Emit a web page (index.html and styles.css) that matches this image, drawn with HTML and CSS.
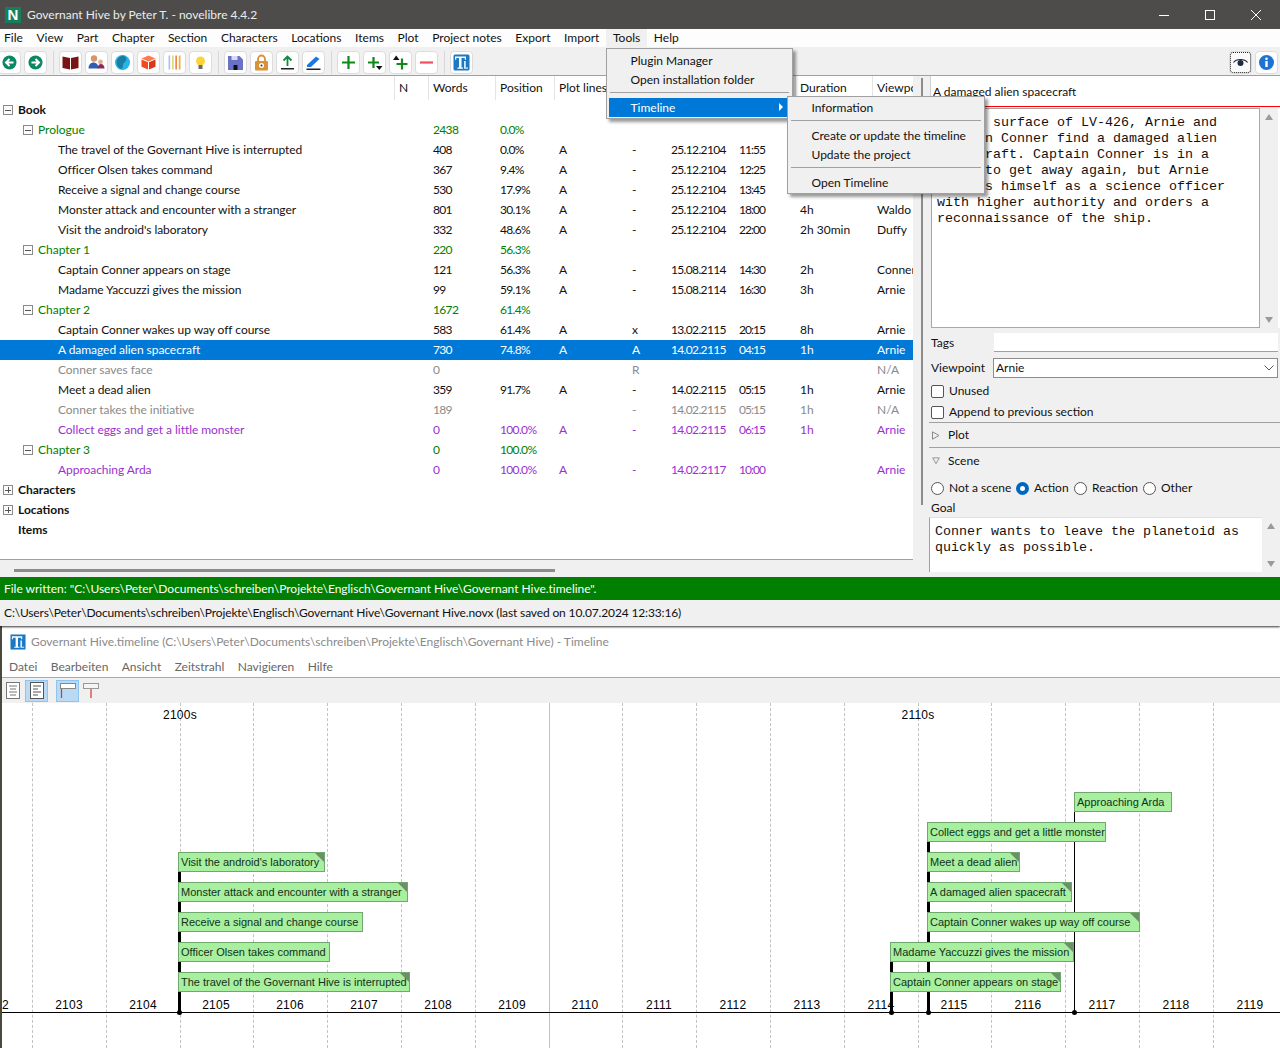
FILE: index.html
```html
<!DOCTYPE html>
<html lang="en">
<head>
<meta charset="utf-8">
<title>Governant Hive by Peter T. - novelibre 4.4.2</title>
<link rel="stylesheet" href="styles.css">
</head>
<body>
<div class="app">
  <section class="main-win">
    <header class="titlebar">
      <span class="app-logo">N</span>
      <span class="title-text">Governant Hive by Peter T. - novelibre 4.4.2</span>
      <span class="win-controls">
        <svg width="12" height="12" viewBox="0 0 12 12"><path d="M1 6.5h10" stroke="#fff"/></svg>
        <svg width="12" height="12" viewBox="0 0 12 12"><rect x="1.5" y="1.5" width="9" height="9" fill="none" stroke="#fff"/></svg>
        <svg width="12" height="12" viewBox="0 0 12 12"><path d="M1 1l10 10M11 1L1 11" stroke="#fff"/></svg>
      </span>
    </header>
    <nav class="menubar">
      <span>File</span><span>View</span><span>Part</span><span>Chapter</span><span>Section</span><span>Characters</span><span>Locations</span><span>Items</span><span>Plot</span><span>Project notes</span><span>Export</span><span>Import</span><span class="menu-open">Tools</span><span>Help</span>
    </nav>
    <div class="toolbar">
      <div class="tgroup">
        <button class="tb"><svg viewBox="0 0 17 17"><circle cx="8.5" cy="8.5" r="7" fill="#0b8763"/><path d="M12.5 8.5H5.5M8.5 5L5 8.5L8.5 12" fill="none" stroke="#fff" stroke-width="2"/></svg></button>
        <button class="tb"><svg viewBox="0 0 17 17"><circle cx="8.5" cy="8.5" r="7" fill="#0b8763"/><path d="M4.5 8.5H11.5M8.5 5L12 8.5L8.5 12" fill="none" stroke="#fff" stroke-width="2"/></svg></button>
      </div>
      <div class="tgroup">
        <button class="tb"><svg viewBox="0 0 17 17"><path d="M0.5 2.5L8 4V15.5L0.5 14zM16.5 2.5L9 4V15.5L16.5 14z" fill="#7a1414"/></svg></button>
        <button class="tb"><svg viewBox="0 0 17 17"><circle cx="6" cy="4.5" r="3.2" fill="#d9946a"/><path d="M0.5 14.5c0-8 10-8 10 0z" fill="#2f5db4"/><circle cx="12.5" cy="8" r="2.4" fill="#e0b090"/><path d="M9.5 14.5c0-6 7-6 7 0z" fill="#8c2a5e"/></svg></button>
        <button class="tb"><svg viewBox="0 0 17 17"><circle cx="8.5" cy="8.5" r="7.5" fill="#25b4e8"/><path d="M9 1.5c3 1 4 3 3 5s-3 2-3 5c0 2-1 3-2 3.5C3 13 2 9 3 6c1-2 3-4 6-4.500z" fill="#1a7f9e"/></svg></button>
        <button class="tb"><svg viewBox="0 0 17 17"><path d="M8.500 1.500L15.500 4.500L8.500 7.500L1.500 4.500z" fill="#ff7a4d"/><path d="M1.500 5.500L8 8.200V15.500L1.500 12.800z" fill="#f04a1e"/><path d="M15.500 5.500L9 8.200V15.500L15.500 12.800z" fill="#d9381a"/></svg></button>
        <button class="tb"><svg viewBox="0 0 17 17"><rect x="2.500" y="1.500" width="1.700" height="14" fill="#a7c7e8"/><rect x="6" y="1.500" width="1.700" height="14" fill="#e8d27f"/><rect x="9.300" y="1.500" width="1.700" height="14" fill="#ef8a3c"/><rect x="12.800" y="1.500" width="1.700" height="14" fill="#e9b04a"/></svg></button>
        <button class="tb"><svg viewBox="0 0 17 17"><circle cx="8.500" cy="7" r="4.500" fill="#fcd43a"/><rect x="6.500" y="11" width="4" height="4" fill="#6a6a6a"/></svg></button>
      </div>
      <div class="tgroup">
        <button class="tb"><svg viewBox="0 0 17 17"><path d="M1 2h11.500l3.500 3.500V16H1z" fill="#6a72c8"/><rect x="4.500" y="2" width="6" height="4" fill="#d8daf2"/><rect x="6.500" y="11" width="4" height="5" fill="#111"/></svg></button>
        <button class="tb"><svg viewBox="0 0 17 17"><path d="M5 7V5a3.500 3.500 0 0 1 7 0v2" fill="none" stroke="#d89238" stroke-width="1.800"/><rect x="2" y="7" width="13" height="9.500" rx="1" fill="#d89238"/><circle cx="8.500" cy="11.500" r="2.500" fill="#fff"/><circle cx="8.500" cy="11.500" r="1" fill="#333"/></svg></button>
        <button class="tb"><svg viewBox="0 0 17 17"><path d="M8.500 12V3M4.500 6.500L8.500 2.500L12.500 6.500" fill="none" stroke="#118a3c" stroke-width="1.800"/><rect x="2" y="14" width="13" height="1.500" fill="#222"/></svg></button>
        <button class="tb"><svg viewBox="0 0 17 17"><path d="M2 11L11 2.500L14.500 5L6 13H2z" fill="#1c78e0"/><rect x="1.500" y="14.500" width="14" height="1.500" fill="#222"/></svg></button>
      </div>
      <div class="tgroup">
        <button class="tb"><svg viewBox="0 0 17 17"><path d="M8.500 2v13M2 8.500h13" stroke="#0c8a16" stroke-width="2.200"/></svg></button>
        <button class="tb"><svg viewBox="0 0 17 17"><path d="M7.500 3v11M2 8.500h11" stroke="#0c8a16" stroke-width="2.200"/><path d="M10 12h6.500l-3.200 4z" fill="#111"/></svg></button>
        <button class="tb"><svg viewBox="0 0 17 17"><path d="M10 4.500v11M4.500 10h11" stroke="#0c8a16" stroke-width="2.200"/><path d="M1 6h6.500L4.200 1.500z" fill="#111"/></svg></button>
        <button class="tb"><svg viewBox="0 0 17 17"><path d="M2 8.500h13" stroke="#f0505c" stroke-width="2.200"/></svg></button>
      </div>
      <div class="tgroup">
        <button class="tb"><svg viewBox="0 0 17 17"><rect x="0.500" y="0.500" width="16" height="16" rx="1.500" fill="#1b78c4"/><path d="M2 2.500h11v3.200h-1.200V4H8.500v9.500H10v1.200H4.500v-1.200H6V4H3.200v1.700H2z" fill="#fff"/><path d="M11 7h1.800v6.500H15v1.200h-4z" fill="#d6ebfa"/></svg></button>
      </div>
      <div class="tright">
        <button class="tb tb-focus"><svg viewBox="0 0 17 17"><path d="M1.500 8.500c3-4 11-4 14 0" fill="none" stroke="#222" stroke-width="1.200"/><circle cx="8.500" cy="9" r="3" fill="#1c2a44"/></svg></button>
        <button class="tb"><svg viewBox="0 0 17 17"><circle cx="8.500" cy="8.500" r="7.500" fill="#1e72d2"/><rect x="7.300" y="7" width="2.400" height="6" fill="#fff"/><circle cx="8.500" cy="4.800" r="1.300" fill="#fff"/></svg></button>
      </div>
    </div>
    <div class="workspace">
      <div class="left">
        <div class="tree">
          <div class="row head">
            <span class="title"></span><span class="sep">N</span><span class="sep">Words</span><span class="sep">Position</span><span class="sep">Plot lines</span><span></span><span></span><span></span><span class="sep">Duration</span><span class="sep">Viewpoint</span>
          </div>
          <div class="row strong"><span class="title lv0"><i class="exp"></i>Book</span></div>
          <div class="row chap"><span class="title lv1"><i class="exp"></i>Prologue</span><span></span><span>2438</span><span>0.0%</span></div>
          <div class="row"><span class="title lv2">The travel of the Governant Hive is interrupted</span><span></span><span>408</span><span>0.0%</span><span>A</span><span>-</span><span>25.12.2104</span><span>11:55</span></div>
          <div class="row"><span class="title lv2">Officer Olsen takes command</span><span></span><span>367</span><span>9.4%</span><span>A</span><span>-</span><span>25.12.2104</span><span>12:25</span></div>
          <div class="row"><span class="title lv2">Receive a signal and change course</span><span></span><span>530</span><span>17.9%</span><span>A</span><span>-</span><span>25.12.2104</span><span>13:45</span></div>
          <div class="row"><span class="title lv2">Monster attack and encounter with a stranger</span><span></span><span>801</span><span>30.1%</span><span>A</span><span>-</span><span>25.12.2104</span><span>18:00</span><span>4h</span><span>Waldo</span></div>
          <div class="row"><span class="title lv2">Visit the android's laboratory</span><span></span><span>332</span><span>48.6%</span><span>A</span><span>-</span><span>25.12.2104</span><span>22:00</span><span>2h 30min</span><span>Duffy</span></div>
          <div class="row chap"><span class="title lv1"><i class="exp"></i>Chapter 1</span><span></span><span>220</span><span>56.3%</span></div>
          <div class="row"><span class="title lv2">Captain Conner appears on stage</span><span></span><span>121</span><span>56.3%</span><span>A</span><span>-</span><span>15.08.2114</span><span>14:30</span><span>2h</span><span>Conner</span></div>
          <div class="row"><span class="title lv2">Madame Yaccuzzi gives the mission</span><span></span><span>99</span><span>59.1%</span><span>A</span><span>-</span><span>15.08.2114</span><span>16:30</span><span>3h</span><span>Arnie</span></div>
          <div class="row chap"><span class="title lv1"><i class="exp"></i>Chapter 2</span><span></span><span>1672</span><span>61.4%</span></div>
          <div class="row"><span class="title lv2">Captain Conner wakes up way off course</span><span></span><span>583</span><span>61.4%</span><span>A</span><span>x</span><span>13.02.2115</span><span>20:15</span><span>8h</span><span>Arnie</span></div>
          <div class="row sel"><span class="title lv2">A damaged alien spacecraft</span><span></span><span>730</span><span>74.8%</span><span>A</span><span>A</span><span>14.02.2115</span><span>04:15</span><span>1h</span><span>Arnie</span></div>
          <div class="row unused"><span class="title lv2">Conner saves face</span><span></span><span>0</span><span></span><span></span><span>R</span><span></span><span></span><span></span><span>N/A</span></div>
          <div class="row"><span class="title lv2">Meet a dead alien</span><span></span><span>359</span><span>91.7%</span><span>A</span><span>-</span><span>14.02.2115</span><span>05:15</span><span>1h</span><span>Arnie</span></div>
          <div class="row unused"><span class="title lv2">Conner takes the initiative</span><span></span><span>189</span><span></span><span></span><span>-</span><span>14.02.2115</span><span>05:15</span><span>1h</span><span>N/A</span></div>
          <div class="row todo"><span class="title lv2">Collect eggs and get a little monster</span><span></span><span>0</span><span>100.0%</span><span>A</span><span>-</span><span>14.02.2115</span><span>06:15</span><span>1h</span><span>Arnie</span></div>
          <div class="row chap"><span class="title lv1"><i class="exp"></i>Chapter 3</span><span></span><span>0</span><span>100.0%</span></div>
          <div class="row todo"><span class="title lv2">Approaching Arda</span><span></span><span>0</span><span>100.0%</span><span>A</span><span>-</span><span>14.02.2117</span><span>10:00</span><span></span><span>Arnie</span></div>
          <div class="row strong"><span class="title lv0"><i class="exp plus"></i>Characters</span></div>
          <div class="row strong"><span class="title lv0"><i class="exp plus"></i>Locations</span></div>
          <div class="row strong"><span class="title lv0">Items</span></div>
        </div>
        <div class="hscroll"><div class="hthumb"></div></div>
      </div>
      <div class="vscroll"><div class="vthumb"></div></div>
      <div class="right">
        <div class="title-entry">A damaged alien spacecraft</div>
        <div class="editor">
          <div class="mono box">On the surface of LV-426, Arnie and
Captain Conner find a damaged alien
spacecraft. Captain Conner is in a
hurry to get away again, but Arnie
reveals himself as a science officer
with higher authority and orders a
reconnaissance of the ship.</div>
          <div class="sb"><i class="up"></i><i class="down"></i></div>
        </div>
        <div class="field tags"><label>Tags</label><div class="entry"></div></div>
        <div class="field vp"><label>Viewpoint</label><div class="combo">Arnie<svg width="10" height="6" viewBox="0 0 10 6"><path d="M0.500 0.500L5 5L9.500 0.500" fill="none" stroke="#555"/></svg></div></div>
        <div class="check c1"><i class="cb"></i>Unused</div>
        <div class="check c2"><i class="cb"></i>Append to previous section</div>
        <div class="fold plot"><svg width="8" height="9" viewBox="0 0 8 9"><path d="M0.500 0.800L7 4.500L0.500 8.200z" fill="none" stroke="#888"/></svg>Plot</div>
        <div class="fold scene"><svg width="8" height="8" viewBox="0 0 9 8"><path d="M0.800 0.500L8.200 0.500L4.500 7z" fill="none" stroke="#888"/></svg>Scene</div>
        <div class="radios">
          <span class="r r1"><i class="rd"></i>Not a scene</span>
          <span class="r r2"><i class="rd on"></i>Action</span>
          <span class="r r3"><i class="rd"></i>Reaction</span>
          <span class="r"><i class="rd"></i>Other</span>
        </div>
        <div class="goal-label">Goal</div>
        <div class="goal">
          <div class="mono gbox">Conner wants to leave the planetoid as
quickly as possible.</div>
          <div class="sb gsb"><i class="up"></i><i class="down"></i></div>
        </div>
      </div>
    </div>
    <div class="status">File written: "C:\Users\Peter\Documents\schreiben\Projekte\Englisch\Governant Hive\Governant Hive.timeline".</div>
    <div class="pathbar">C:\Users\Peter\Documents\schreiben\Projekte\Englisch\Governant Hive\Governant Hive.novx (last saved on 10.07.2024 12:33:16)</div>

    <div class="popup pop-tools">
      <div class="mi">Plugin Manager</div>
      <div class="mi">Open installation folder</div>
      <div class="msep"></div>
      <div class="mi active">Timeline<i class="arrow"></i></div>
    </div>
    <div class="popup pop-sub">
      <div class="mi">Information</div>
      <div class="msep"></div>
      <div class="mi">Create or update the timeline</div>
      <div class="mi">Update the project</div>
      <div class="msep"></div>
      <div class="mi">Open Timeline</div>
    </div>
  </section>

  <section class="tl-win">
    <header class="tl-title">
      <svg width="16" height="16" viewBox="0 0 17 17"><rect x="0.500" y="0.500" width="16" height="16" fill="#1b78c4"/><path d="M2 2.500h11v3.200h-1.200V4H8.500v9.500H10v1.200H4.500v-1.200H6V4H3.200v1.700H2z" fill="#fff"/><path d="M11 7h1.800v6.500H15v1.200h-4z" fill="#d6ebfa"/></svg>
      <span>Governant Hive.timeline (C:\Users\Peter\Documents\schreiben\Projekte\Englisch\Governant Hive) - Timeline</span>
    </header>
    <nav class="tl-menu"><span>Datei</span><span>Bearbeiten</span><span>Ansicht</span><span>Zeitstrahl</span><span>Navigieren</span><span>Hilfe</span></nav>
    <div class="tl-tools">
      <span class="tt"><svg width="14" height="17" viewBox="0 0 14 17"><rect x="0.500" y="0.500" width="13" height="16" fill="#fff" stroke="#777"/><path d="M3 4h8M4 7h6M3 10h8M4 13h6" stroke="#777"/></svg></span>
      <span class="tt on"><svg width="14" height="17" viewBox="0 0 14 17"><rect x="0.500" y="0.500" width="13" height="16" fill="#fff" stroke="#555"/><path d="M3 4h8M3 7h5M3 10h8M3 13h5" stroke="#555"/></svg></span>
      <span class="tt on wide"><svg width="16" height="17" viewBox="0 0 16 17"><rect x="0.500" y="1.500" width="15" height="5" fill="#fff" stroke="#888"/><path d="M1.500 7v9" stroke="#d8342c" stroke-width="1.200"/></svg></span>
      <span class="tt plain"><svg width="16" height="17" viewBox="0 0 16 17"><rect x="0.500" y="1.500" width="15" height="5" fill="#f4f4f4" stroke="#999"/><path d="M8 7v9" stroke="#d8342c" stroke-width="1.200"/></svg></span>
    </div>
    <div class="canvas">
      <i class="g" style="left:32px"></i><i class="g" style="left:106px"></i><i class="g" style="left:180px"></i><i class="g" style="left:253px"></i><i class="g" style="left:327px"></i><i class="g" style="left:401px"></i><i class="g" style="left:475px"></i><i class="g solid" style="left:549px"></i><i class="g" style="left:622px"></i><i class="g" style="left:696px"></i><i class="g" style="left:770px"></i><i class="g" style="left:844px"></i><i class="g" style="left:918px"></i><i class="g" style="left:991px"></i><i class="g" style="left:1065px"></i><i class="g" style="left:1139px"></i><i class="g" style="left:1213px"></i>
      <span class="decade" style="left:180px">2100s</span><span class="decade" style="left:918px">2110s</span>
      <i class="axis"></i>
      <span class="yr" style="left:-5px">2102</span><span class="yr" style="left:69px">2103</span><span class="yr" style="left:143px">2104</span><span class="yr" style="left:216px">2105</span><span class="yr" style="left:290px">2106</span><span class="yr" style="left:364px">2107</span><span class="yr" style="left:438px">2108</span><span class="yr" style="left:512px">2109</span><span class="yr" style="left:585px">2110</span><span class="yr" style="left:659px">2111</span><span class="yr" style="left:733px">2112</span><span class="yr" style="left:807px">2113</span><span class="yr" style="left:881px">2114</span><span class="yr" style="left:954px">2115</span><span class="yr" style="left:1028px">2116</span><span class="yr" style="left:1102px">2117</span><span class="yr" style="left:1176px">2118</span><span class="yr" style="left:1250px">2119</span>
      <i class="stem" style="left:178px;top:149px;height:161px"></i><i class="dot" style="left:177px"></i>
      <i class="stem" style="left:890px;top:239px;height:71px"></i><i class="dot" style="left:889px"></i>
      <i class="stem" style="left:927px;top:119px;height:191px"></i><i class="dot" style="left:926px"></i>
      <i class="stem thin" style="left:1074px;top:89px;height:221px"></i><i class="dot" style="left:1072px"></i>
      <div class="ev note" style="left:178px;top:149px;width:147px">Visit the android's laboratory</div>
      <div class="ev note" style="left:178px;top:179px;width:230px">Monster attack and encounter with a stranger</div>
      <div class="ev" style="left:178px;top:209px;width:185px">Receive a signal and change course</div>
      <div class="ev" style="left:178px;top:239px;width:152px">Officer Olsen takes command</div>
      <div class="ev note" style="left:178px;top:269px;width:232px">The travel of the Governant Hive is interrupted</div>
      <div class="ev" style="left:1074px;top:89px;width:98px">Approaching Arda</div>
      <div class="ev" style="left:927px;top:119px;width:179px">Collect eggs and get a little monster</div>
      <div class="ev note" style="left:927px;top:149px;width:93px">Meet a dead alien</div>
      <div class="ev note" style="left:927px;top:179px;width:145px">A damaged alien spacecraft</div>
      <div class="ev note" style="left:927px;top:209px;width:213px">Captain Conner wakes up way off course</div>
      <div class="ev note" style="left:890px;top:239px;width:184px">Madame Yaccuzzi gives the mission</div>
      <div class="ev note" style="left:890px;top:269px;width:171px">Captain Conner appears on stage</div>
    </div>
  </section>
</div>
</body>
</html>
```

FILE: styles.css
```css
* { box-sizing: border-box; }
html, body { margin: 0; padding: 0; }
body { width: 1280px; height: 1048px; overflow: hidden; background: #fff; color: #111; font: 12px/16px Lato, "Noto Sans", sans-serif; }
i { display: block; font-style: normal; }
.app { display: flex; flex-direction: column; width: 1280px; height: 1048px; }

.main-win { position: relative; z-index: 2; height: 626px; flex: none; background: #f0f0f0; display: flex; flex-direction: column; box-shadow: 0 1px 2px rgba(0,0,0,.8); }
.titlebar { height: 29px; flex: none; background: #4d4c4b; color: #ececec; display: flex; align-items: center; padding-left: 5px; }
.app-logo { width: 16px; height: 16px; background: #157f5c; color: #fff; font: 900 15px/16px "Liberation Sans", sans-serif; text-align: center; }
.title-text { margin-left: 6px; }
.win-controls { margin-left: auto; display: flex; gap: 34px; padding-right: 18px; }
.menubar { height: 18px; flex: none; background: #fdfdfd; display: flex; gap: 13.600px; padding-left: 4px; align-items: center; }
.menu-open { background: #f0f0f0; padding: 0 7px; margin: 0 -7px; line-height: 18px; }
.toolbar { height: 29px; flex: none; border-bottom: 1px solid #a0a0a0; display: flex; align-items: center; padding: 2px 2px 0; }
.tgroup { display: flex; gap: 3px; padding-right: 6px; margin-right: 5px; border-right: 1px solid #d8d8d8; height: 23px; }
.tgroup:first-child { margin-left: -4px; }
.tgroup:nth-child(5) { border: 0; }
.tright { margin-left: auto; display: flex; gap: 3px; }
.tb { width: 23px; height: 23px; padding: 2px; background: #fff; border: 1px solid #dcdcdc; border-radius: 4px; display: flex; align-items: center; justify-content: center; }
.tb svg { width: 17px; height: 17px; display: block; }
.tb-focus { outline: 1px dotted #222; outline-offset: -2px; background: #fafafa; }

.workspace { display: flex; height: 501px; flex: none; }
.left { width: 913px; flex: none; display: flex; flex-direction: column; }
.tree { height: 484px; background: #fff; border-bottom: 1px solid #a0a0a0; overflow: hidden; }
.row { display: grid; grid-template-columns: 394px 34px 67px 59px 73px 39px 68px 61px 77px 41px; height: 20px; line-height: 20px; white-space: nowrap; }
.row span { padding-left: 5px; overflow: hidden; }
.row .title { padding-left: 0; }
.row span.sep { border-left: 1px solid #e4e4e4; padding-left: 4px; }
.row span:nth-child(3), .row span:nth-child(4), .row span:nth-child(7) { letter-spacing: -.65px; }
.row span:nth-child(8) { letter-spacing: -1px; }
.head span:nth-child(n) { letter-spacing: 0; }
.head { height: 24px; line-height: 24px; }
.lv0 { padding-left: 18px !important; position: relative; }
.lv1 { padding-left: 38px !important; position: relative; }
.lv2 { padding-left: 58px !important; letter-spacing: -.05px; }
.strong .title { font-weight: 700; }
.chap { color: #008000; }
.sel { background: #0078d7; color: #fff; }
.unused { color: #8a8a8a; }
.todo { color: #9a2fd2; }
.exp { position: absolute; top: 5px; left: 3px; width: 10px; height: 10px; border: 1px solid #8a8a8a; background: linear-gradient(#555,#555) center/6px 1px no-repeat, #fbfbfb; }
.lv1 .exp { left: 23px; }
.exp.plus { background: linear-gradient(#555,#555) center/6px 1px no-repeat, linear-gradient(#555,#555) center/1px 6px no-repeat, #fbfbfb; }
.hscroll { height: 17px; background: #f0f0f0; padding: 9px 0 0 14px; }
.hthumb { width: 541px; height: 3px; background: #8c8c8c; }
.vscroll { width: 13px; flex: none; padding: 2px 0 0 7.500px; }
.vthumb { width: 2.500px; height: 427px; background: #8c8c8c; }

.right { flex: 1; min-width: 0; display: flex; flex-direction: column; position: relative; }
.title-entry { margin: 0 0 1px 4px; height: 31px; background: #fff; border-left: 1px solid #d0d0d0; border-bottom: 1px solid #ff0000; padding: 8px 0 0 2px; line-height: 16px; }
.editor { display: flex; height: 220px; margin-left: 5px; border-right: 2px solid #fff; }
.mono { font: 13.330px/16px "Liberation Mono", monospace; white-space: pre; color: #111; }
.box { flex: 1; min-width: 0; background: #fff; border: 1px solid #a8a8a8; padding: 6px 0 0 5px; overflow: hidden; }
.sb { width: 18px; flex: none; background: #f0f0f0; position: relative; }
.up, .down { position: absolute; left: 5px; width: 0; height: 0; border-left: 4.500px solid transparent; border-right: 4.500px solid transparent; }
.up { top: 6px; border-bottom: 6px solid #9a9a9a; }
.down { bottom: 5px; border-top: 6px solid #9a9a9a; }
.field { display: flex; margin-left: 5px; align-items: center; }
.field label { width: 63px; flex: none; }
.tags { height: 19px; margin-top: 5px; }
.entry { height: 19px; width: 284px; background: #fff; border-bottom: 1px solid #a0a0a0; }
.vp { height: 20px; margin-top: 6px; }
.combo { width: 285px; height: 20px; background: #fff; border: 1px solid #8c8c8c; padding-left: 2px; line-height: 18px; margin-left: -1px; display: flex; align-items: center; justify-content: space-between; padding-right: 3px; }
.check { display: flex; align-items: center; gap: 5px; margin-left: 5px; height: 16px; }
.c1 { margin-top: 5px; }
.c2 { margin-top: 5px; }
.cb { width: 13px; height: 13px; border: 1px solid #555; border-radius: 2px; background: #fff; }
.fold { display: flex; align-items: center; margin-left: 3px; height: 25px; gap: 8px; padding-left: 3px; border-top: 1px solid #a0a0a0; }
.plot { margin-top: 2px; }
.scene { height: 26px; }
.radios { display: flex; margin: 7px 0 0 5px; height: 16px; align-items: center; }
.r { display: flex; gap: 5px; align-items: center; }
.r1 { width: 85px; }
.r2 { width: 58px; }
.r3 { width: 69px; }
.rd { width: 13px; height: 13px; border-radius: 50%; border: 1px solid #555; background: #fff; }
.rd.on { border: 4px solid #0067c0; }
.goal-label { margin: 4px 0 0 5px; height: 16px; }
.goal { display: flex; margin: 1px 0 0 3px; height: 55px; }
.gbox { width: 333px; background: #fff; border-left: 1px solid #a0a0a0; border-top: 1px solid #e0e0e0; padding: 6px 0 0 5px; overflow: hidden; }
.gsb { background: transparent; }
.status { height: 23px; flex: none; background: #007f00; color: #fff; padding-left: 4px; line-height: 23px; letter-spacing: -.02px; }
.pathbar { height: 26px; flex: none; padding-left: 4px; line-height: 26px; color: #111; letter-spacing: -.14px; }

.popup { position: absolute; background: #f0f0f0; border: 1px solid #a0a0a0; box-shadow: 3px 3px 3px rgba(0,0,0,.4); padding: 2px; z-index: 5; }
.pop-tools { left: 606px; top: 48px; width: 187px; height: 71px; }
.pop-sub { left: 787px; top: 96px; width: 198px; height: 98px; padding-top: 1px; z-index: 6; }
.mi { height: 19px; line-height: 19px; padding-left: 21.500px; position: relative; }
.msep { height: 1px; background: #a0a0a0; margin: 3px 1px 5px; }
.active { background: #0078d7; color: #fff; margin-right: -3px; }
.arrow { position: absolute; right: 10px; top: 5px; width: 0; height: 0; border-left: 4px solid #fff; border-top: 4px solid transparent; border-bottom: 4px solid transparent; }

.tl-win { flex: 1; min-height: 0; display: flex; flex-direction: column; background: #fff; border-left: 2px solid #4a4a3c; }
.tl-title { height: 31px; flex: none; display: flex; align-items: center; gap: 5px; padding: 1px 0 0 8px; color: #8a8a8a; }
.tl-menu { height: 21px; flex: none; display: flex; gap: 13.400px; align-items: center; padding: 0 0 1px 7px; color: #666; border-bottom: 1px solid #a8a8a8; }
.tl-tools { height: 25px; flex: none; background: #f0f0f0; display: flex; align-items: center; padding-left: 1px; gap: 2px; }
.tt { width: 23px; height: 22px; display: flex; align-items: center; justify-content: center; }
.tt:first-child { width: 20px; }
.tt.on { background: #b9d9f5; border: 1px solid #8fc4ee; }
.tt.wide { margin-left: 6px; }
.tt.plain { width: 19px; }
.canvas { flex: 1; position: relative; background: #fff; overflow: hidden; }
.g { position: absolute; top: 0; bottom: 0; margin-left: -2px; border-left: 1px dashed #c2c2c2; }
.g.solid { border-left: 1px solid #c2c2c2; }
.decade { position: absolute; top: 4px; transform: translateX(-50%); margin-left: -2px; font: 12px/16px "Liberation Sans", sans-serif; letter-spacing: .25px; color: #000; }
.axis { position: absolute; left: 0; right: 0; top: 309px; height: 1px; background: #000; }
.yr { position: absolute; top: 294px; transform: translateX(-50%); margin-left: -2px; font: 12px/16px "Liberation Sans", sans-serif; letter-spacing: .25px; color: #000; }
.stem { position: absolute; width: 3px; margin-left: -2px; background: #000; }
.stem.thin { width: 1px; }
.dot { position: absolute; top: 307px; width: 5px; height: 5px; margin-left: -2px; border-radius: 50%; background: #000; }
.ev { position: absolute; height: 20px; margin-left: -2px; background: #a8ef9f; border: 1px solid #6fa86d; padding-left: 2px; font: 11px/18px "Liberation Sans", sans-serif; letter-spacing: 0; color: #12321a; white-space: nowrap; overflow: hidden; }
.note::after { content: ""; position: absolute; top: 0; right: 0; width: 0; height: 0; border-top: 9px solid #6c8f69; border-left: 9px solid transparent; }
```
